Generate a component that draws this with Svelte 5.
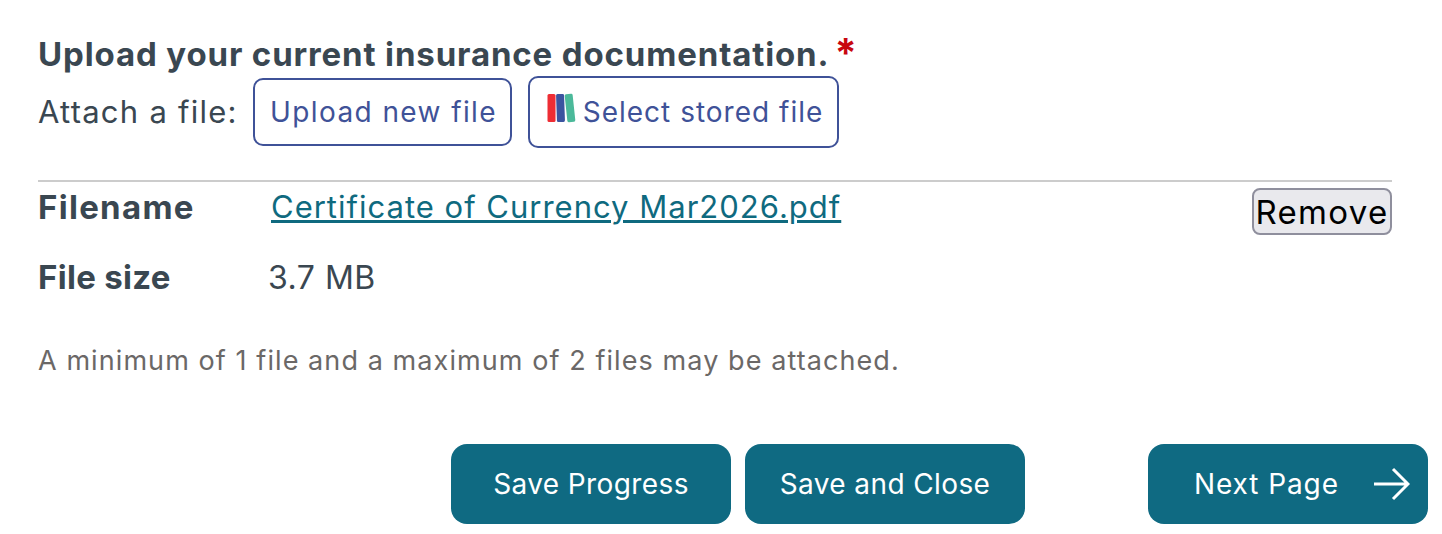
<script>
	const fileName = 'Certificate of Currency Mar2026.pdf'
	const fileSize = '3.7 MB'
</script>

<div class="page">
	<div class="field">
		<div class="question">
			<h2>Upload your current insurance documentation.</h2>
			<span class="required">*</span>
		</div>
		<div class="attach">
			<span class="attach-label">Attach a file:</span>
			<button class="outline upload">Upload new file</button>
			<button class="outline stored">
				<svg class="books" viewBox="0 0 29 30" width="29" height="30" aria-hidden="true">
					<rect x="0.5" y="1" width="8" height="28" rx="1.5" fill="#ee2d34" />
					<rect x="9.5" y="1" width="8" height="28" rx="1.5" fill="#3b54a0" transform="rotate(-2 13.5 15)" />
					<rect x="19" y="1" width="8" height="28" rx="1.5" fill="#4bb99a" transform="rotate(-6 23 15)" />
				</svg>
				<span>Select stored file</span>
			</button>
		</div>

		<div class="file">
			<div class="file-row first">
				<span class="key wide">Filename</span>
				<a class="name" href="#top">{fileName}</a>
				<button class="remove">Remove</button>
			</div>
			<div class="file-row">
				<span class="key">File size</span>
				<span class="size">{fileSize}</span>
			</div>
		</div>

		<p class="note">A minimum of 1 file and a maximum of 2 files may be attached.</p>
	</div>

	<div class="actions">
		<button class="solid">Save Progress</button>
		<button class="solid">Save and Close</button>
		<button class="solid next">
			<span>Next Page</span>
			<svg viewBox="0 0 36 34" width="36" height="34" fill="none" stroke="#fff" stroke-width="3" aria-hidden="true">
				<path d="M0 17H34M19 2L34 17L19 32" />
			</svg>
		</button>
	</div>
</div>

<style>
	:global(body) {
		background: #fff;
		font-family: Inter, 'Liberation Sans', sans-serif;
	}
	.page {
		box-sizing: border-box;
		width: 1442px;
		height: 534px;
		padding: 34px 14px 0 38px;
		color: #3a4751;
	}
	.field {
		margin-right: 36px;
	}
	.question {
		display: flex;
		height: 42px;
	}
	h2 {
		margin: 0;
		font-size: 33px;
		line-height: 40px;
		font-weight: 700;
		letter-spacing: 0.86px;
		white-space: nowrap;
	}
	.required {
		margin-left: 5px;
		color: #c8070f;
		font-size: 40px;
		font-weight: 700;
		line-height: 38px;
	}
	.attach {
		display: flex;
		align-items: center;
		margin-bottom: 32px;
	}
	.attach-label {
		width: 215px;
		margin-top: -2px;
		font-size: 31px;
		letter-spacing: 1.25px;
		white-space: nowrap;
	}
	button {
		font-family: inherit;
		cursor: pointer;
	}
	.outline {
		box-sizing: border-box;
		display: flex;
		align-items: center;
		justify-content: center;
		padding: 0;
		background: #fff;
		color: #3f5298;
		border: 2px solid #3f5298;
		border-radius: 10px;
		font-size: 28px;
		letter-spacing: 1px;
		white-space: nowrap;
	}
	.upload {
		width: 259px;
		height: 68px;
		margin-right: 16px;
		padding-left: 2px;
		letter-spacing: 1.4px;
	}
	.stored {
		width: 311px;
		height: 72px;
		gap: 7px;
		padding-left: 3px;
	}
	.books {
		margin-top: -8px;
	}
	.file {
		border-top: 2px solid #ccc;
		padding-top: 6px;
	}
	.file-row {
		display: flex;
		align-items: flex-start;
		height: 70px;
		font-size: 30px;
		line-height: 38px;
	}
	.first {
		justify-content: space-between;
	}
	.key {
		width: 231px;
		flex: none;
		font-weight: 700;
		font-size: 33px;
		letter-spacing: 0.3px;
	}
	.wide {
		letter-spacing: 1.3px;
	}
	.name {
		flex: 1;
		padding-left: 2px;
		color: #0f6a7f;
		font-size: 31px;
		letter-spacing: 1px;
	}
	.remove {
		box-sizing: border-box;
		width: 140px;
		height: 47px;
		padding: 0;
		background: #e9e9ed;
		color: #000;
		border: 2px solid #8f8f9d;
		border-radius: 8px;
		font-size: 33px;
		letter-spacing: 1.3px;
	}
	.size {
		margin-left: -1px;
		padding-top: 1px;
		font-size: 32px;
		letter-spacing: 0.5px;
	}
	.note {
		margin: 16px 0 0;
		color: #6b6867;
		font-size: 27px;
		line-height: 34px;
		letter-spacing: 1.08px;
		white-space: nowrap;
	}
	.actions {
		display: flex;
		gap: 14px;
		margin: 66px 0 0 413px;
	}
	.solid {
		box-sizing: border-box;
		display: flex;
		align-items: center;
		justify-content: center;
		width: 280px;
		height: 80px;
		padding: 0;
		background: #0f6a82;
		color: #fff;
		border: 0;
		border-radius: 16px;
		font-size: 28px;
		letter-spacing: 0.4px;
	}
	.next {
		margin-left: 109px;
		justify-content: flex-start;
		gap: 35px;
		padding-left: 46px;
		letter-spacing: 0.9px;
	}
</style>
